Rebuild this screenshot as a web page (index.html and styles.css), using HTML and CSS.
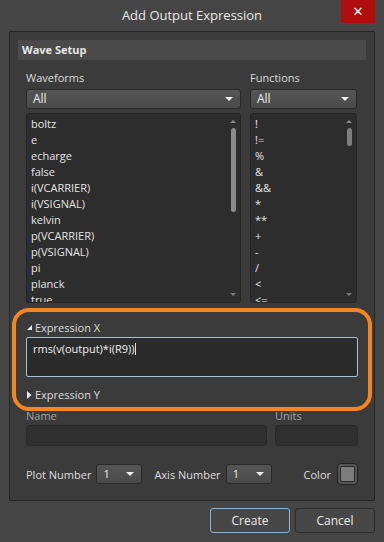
FILE: index.html
```html
<!DOCTYPE html>
<html lang="en">
<head>
<meta charset="UTF-8" />
<meta name="viewport" content="width=device-width, initial-scale=1" />
<title>Add Output Expression</title>
<link rel="stylesheet" href="styles.css">
</head>
<body>
<div class="window">
  <div class="titlebar">
    <span>Add Output Expression</span>
    <button class="close">&#10005;</button>
  </div>

  <div class="panel">
    <div class="group-head">Wave Setup</div>
    <div class="panel-body">

      <!-- waveform / function pickers -->
      <div class="lists">
        <div class="col col-wave">
          <div class="lbl">Waveforms</div>
          <div class="combo">All<span class="arrow"></span></div>
          <div class="listbox">
            <div class="items">
              <div>boltz</div>
              <div>e</div>
              <div>echarge</div>
              <div>false</div>
              <div>i(VCARRIER)</div>
              <div>i(VSIGNAL)</div>
              <div>kelvin</div>
              <div>p(VCARRIER)</div>
              <div>p(VSIGNAL)</div>
              <div>pi</div>
              <div>planck</div>
              <div>true</div>
            </div>
            <div class="scroll">
              <span class="up"></span>
              <div class="track"><div class="thumb thumb-wave"></div></div>
              <span class="down"></span>
            </div>
          </div>
        </div>
        <div class="col col-func">
          <div class="lbl">Functions</div>
          <div class="combo">All<span class="arrow"></span></div>
          <div class="listbox">
            <div class="items">
              <div>!</div>
              <div>!=</div>
              <div>%</div>
              <div>&amp;</div>
              <div>&amp;&amp;</div>
              <div>*</div>
              <div>**</div>
              <div>+</div>
              <div>-</div>
              <div>/</div>
              <div>&lt;</div>
              <div>&lt;=</div>
            </div>
            <div class="scroll">
              <span class="up"></span>
              <div class="track"><div class="thumb thumb-func"></div></div>
              <span class="down"></span>
            </div>
          </div>
        </div>
      </div>

      <!-- expressions -->
      <div class="expr">
        <div class="ring"></div>
        <div class="expander">
          <svg width="5" height="5" viewBox="0 0 5 5"><path d="M5 0 L5 5 L0 5 Z" fill="#e6e6e6"/></svg>
          <span>Expression X</span>
        </div>
        <div class="expr-input">rms(v(output)*i(R9))<span class="caret"></span></div>
        <div class="expander closed">
          <svg width="5" height="8" viewBox="0 0 5 8"><path d="M0 0 L4.5 4 L0 8 Z" fill="#e6e6e6"/></svg>
          <span>Expression Y</span>
        </div>
      </div>

      <div class="fields">
        <div class="field field-name">
          <div class="lbl dim">Name</div>
          <div class="textbox"></div>
        </div>
        <div class="field field-units">
          <div class="lbl dim">Units</div>
          <div class="textbox"></div>
        </div>
      </div>

      <div class="opts">
        <span class="opt-lbl">Plot Number</span>
        <div class="combo small">1<span class="arrow"></span></div>
        <span class="opt-lbl axis">Axis Number</span>
        <div class="combo small">1<span class="arrow"></span></div>
        <span class="opt-lbl color">Color</span>
        <div class="swatch"><div class="swatch-in"></div></div>
      </div>

    </div>
  </div>

  <div class="buttons">
    <button class="btn primary">Create</button>
    <button class="btn">Cancel</button>
  </div>
</div>
</body>
</html>
```

FILE: styles.css
```css
* { box-sizing: border-box; }
body { margin: 0; background: #454545; font-family: 'Open Sans', 'Noto Sans', sans-serif; font-size: 11px; color: #e2e2e2; }
.window { width: 384px; height: 542px; background: #454545; overflow: hidden; }

.titlebar { position: relative; height: 31px; display: flex; align-items: center; justify-content: center; font-size: 13px; color: #e8e8e8; padding-bottom: 1px; }
.close { position: absolute; top: 0; right: 9px; width: 34px; height: 23px; background: #b00d0d; color: #fff; border: none; font-size: 13px; font-weight: 700; padding: 0; font-family: 'DejaVu Sans', sans-serif; }

.panel { margin: 0 9px; height: 470px; background: #3b3b3b; border: 1px solid #262626; padding: 8px 8px 0; }
.group-head { height: 20px; background: #4a4a4a; font-weight: 700; color: #e6e6e6; padding-left: 4px; line-height: 20px; }
.panel-body { padding: 0 8px; }

.lbl { height: 15px; line-height: 15px; color: #dcdcdc; }
.lbl.dim { color: #a2a2a2; }

.lists { display: flex; gap: 9px; margin-top: 10px; }
.col-wave { width: 215px; }
.col-func { width: 107px; }
.col .combo { margin-top: 4px; }

.combo { position: relative; height: 20px; line-height: 18px; padding-left: 6px; border: 1px solid #2a2a2a; border-radius: 3px; background: linear-gradient(#555, #4a4a4a); color: #f0f0f0; font-size: 12px; }
.arrow { position: absolute; right: 7px; top: 7px; width: 0; height: 0; border-left: 4px solid transparent; border-right: 4px solid transparent; border-top: 4px solid #f2f2f2; }

.listbox { display: flex; margin-top: 4px; height: 190px; background: #2d2d2d; border: 1px solid #262626; border-radius: 2px; overflow: hidden; }
.items { flex: 1; padding: 2px 0 0 4px; line-height: 16px; color: #e4e4e4; white-space: nowrap; }
.scroll { width: 14px; display: flex; flex-direction: column; align-items: center; padding: 6px 0 6px; }
.scroll .up, .scroll .down { width: 0; height: 0; border-left: 3px solid transparent; border-right: 3px solid transparent; }
.scroll .up { border-bottom: 3px solid #8a8a8a; }
.scroll .down { border-top: 3px solid #7a7a7a; }
.track { flex: 1; width: 5px; padding-top: 5px; }
.thumb { width: 5px; border-radius: 3px; background: #8b8b8b; }
.thumb-wave { height: 84px; }
.thumb-func { height: 18px; background: #7e7e7e; }

.expr { position: relative; margin-top: 16px; }
.ring { position: absolute; left: -14px; right: -14px; top: -11px; bottom: -9px; border: 4px solid #f3861c; border-radius: 17px; pointer-events: none; }
.expander { display: flex; align-items: center; gap: 3px; height: 16px; padding-left: 1px; color: #dedede; }
.expander svg { margin-top: 1px; }
.expander.closed { margin-top: 9px; }
.expr-input { margin-top: 2px; height: 40px; background: #2b2b2b; border: 1px solid #a7c0d8; border-radius: 2px; padding: 3px 6px; color: #f0f0f0; font-size: 11px; }
.caret { display: inline-block; width: 1px; height: 12px; background: #e0e0e0; vertical-align: -2px; margin-left: 1px; }

.fields { display: flex; gap: 8px; margin-top: 6px; }
.field-name { width: 241px; }
.field-units { width: 83px; }
.textbox { margin-top: 2px; height: 21px; background: #2f2f2f; border: 1px solid #2a2a2a; border-radius: 3px; }

.opts { display: flex; align-items: center; height: 22px; margin-top: 17px; }
.opt-lbl { color: #dedede; margin-right: 5px; }
.opt-lbl.axis { margin-left: 12px; }
.opt-lbl.color { margin-left: auto; margin-right: 6px; }
.combo.small { width: 46px; font-size: 11px; }
.swatch { width: 21px; height: 22px; border: 1px solid #222; border-radius: 4px; background: #555; padding: 2px; }
.swatch-in { width: 100%; height: 100%; background: #7c7c7c; border: 1px solid #2a2a2a; border-radius: 2px; }

.buttons { display: flex; justify-content: flex-end; gap: 5px; margin-top: 7px; padding-right: 9px; }
.btn { width: 80px; height: 25px; background: #474747; border: 1px solid #2b2b2b; border-radius: 3px; color: #eaeaea; font-family: 'Open Sans', 'Noto Sans', sans-serif; font-size: 12px; padding: 0; }
.btn.primary { border-color: #8fb0cf; }
```
